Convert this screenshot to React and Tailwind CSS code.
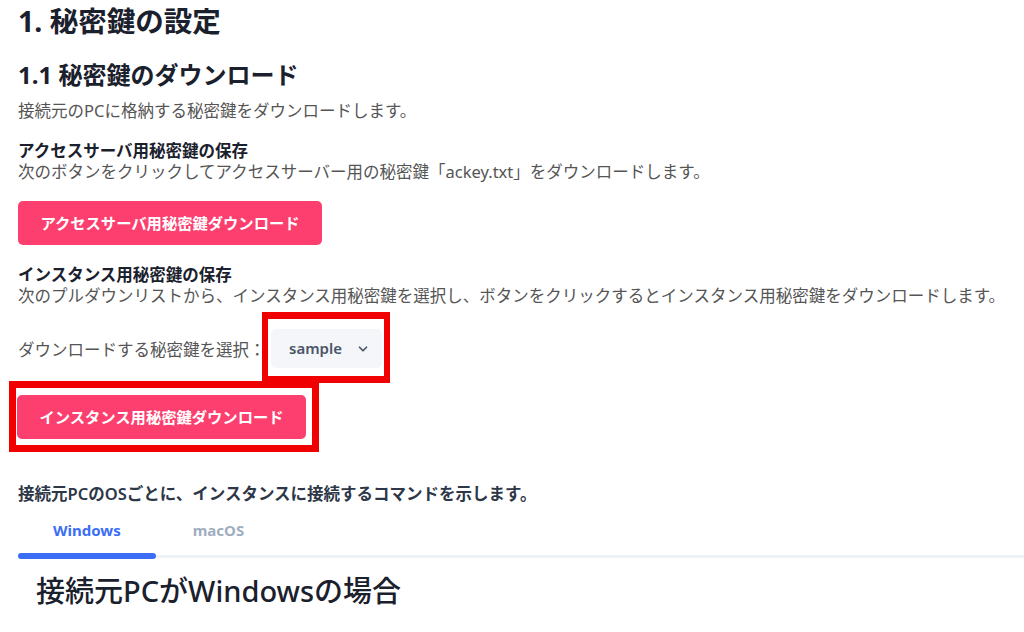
import React from "react";
import { ChevronDown } from "lucide-react";

const font = { fontFamily: '"Noto Sans", "Noto Sans CJK JP", sans-serif' };

export default function App() {
  return (
    <div className="w-[1024px] h-[632px] overflow-hidden bg-white" style={font}>
      <div className="flex flex-col items-start px-[18px]">
        <h1 className="mt-[3px] text-[28.5px] leading-[36px] font-bold text-[#1a202c]">1. 秘密鍵の設定</h1>
        <h2 className="mt-[20px] text-[24px] leading-[32px] font-bold text-[#1a202c]">1.1 秘密鍵のダウンロード</h2>
        <p className="mt-[8px] text-[16.5px] leading-[24px] text-[#555]">接続元のPCに格納する秘密鍵をダウンロードします。</p>

        <h3 className="mt-[17px] text-[16.5px] leading-[21px] font-bold text-[#1a202c]">アクセスサーバ用秘密鍵の保存</h3>
        <p className="text-[16.5px] leading-[21px] text-[#555]">次のボタンをクリックしてアクセスサーバー用の秘密鍵「ackey.txt」をダウンロードします。</p>
        <button className="mt-[19px] h-[44px] w-[304px] rounded-[5px] bg-[#fc3f6e] text-[15.3px] font-bold text-white">
          アクセスサーバ用秘密鍵ダウンロード
        </button>

        <h3 className="mt-[19px] text-[16.5px] leading-[21px] font-bold text-[#1a202c]">インスタンス用秘密鍵の保存</h3>
        <p className="text-[16.5px] leading-[21px] text-[#555] whitespace-nowrap">次のプルダウンリストから、インスタンス用秘密鍵を選択し、ボタンをクリックするとインスタンス用秘密鍵をダウンロードします。</p>

        <div className="mt-[6px] flex items-center">
          <span className="w-[244px] shrink-0 whitespace-nowrap text-[16.5px] leading-[24px] text-[#555] mt-[4px]">ダウンロードする秘密鍵を選択：</span>
          <div className="border-x-[6px] border-y-[7px] border-[#f00000] pl-[3px] pr-[2px] pt-[10px] pb-[8px]">
            <div className="flex h-[39px] w-[111px] items-center justify-center gap-[14px] rounded-[5px] bg-[#f4f6fa] pl-[6px] text-[15px] font-semibold text-[#4a5568]">
              <span>sample</span>
              <ChevronDown size={14} strokeWidth={3} />
            </div>
          </div>
        </div>

        <div className="-mt-[2px] -ml-[9px] border-[7px] border-[#f00000] pl-[1px] pr-[6px] pt-[7px] pb-[6px]">
          <button className="h-[44px] w-[289px] rounded-[5px] bg-[#fc3f6e] text-[15.3px] font-bold text-white">
            インスタンス用秘密鍵ダウンロード
          </button>
        </div>

        <p className="mt-[32px] text-[16.5px] leading-[20px] font-semibold text-[#2d3748]">接続元PCのOSごとに、インスタンスに接続するコマンドを示します。</p>
      </div>

      <div className="ml-[18px] mt-[10px] flex border-b-[3px] border-[#eef1f6]">
        <div className="relative px-[35px] pt-[6px] pb-[15px] text-[15px] leading-[20px] font-bold text-[#3b6ef5]">
          Windows
          <div className="absolute left-0 right-0 bottom-[-4px] h-[6px] rounded-full bg-[#3b6ef5]" />
        </div>
        <div className="px-[37px] pt-[6px] pb-[15px] text-[15px] leading-[20px] font-bold text-[#a0aec0]">macOS</div>
      </div>

      <h2 className="ml-[36px] mt-[13px] text-[29px] leading-[40px] font-medium text-[#1a202c]">接続元PCがWindowsの場合</h2>
    </div>
  );
}
